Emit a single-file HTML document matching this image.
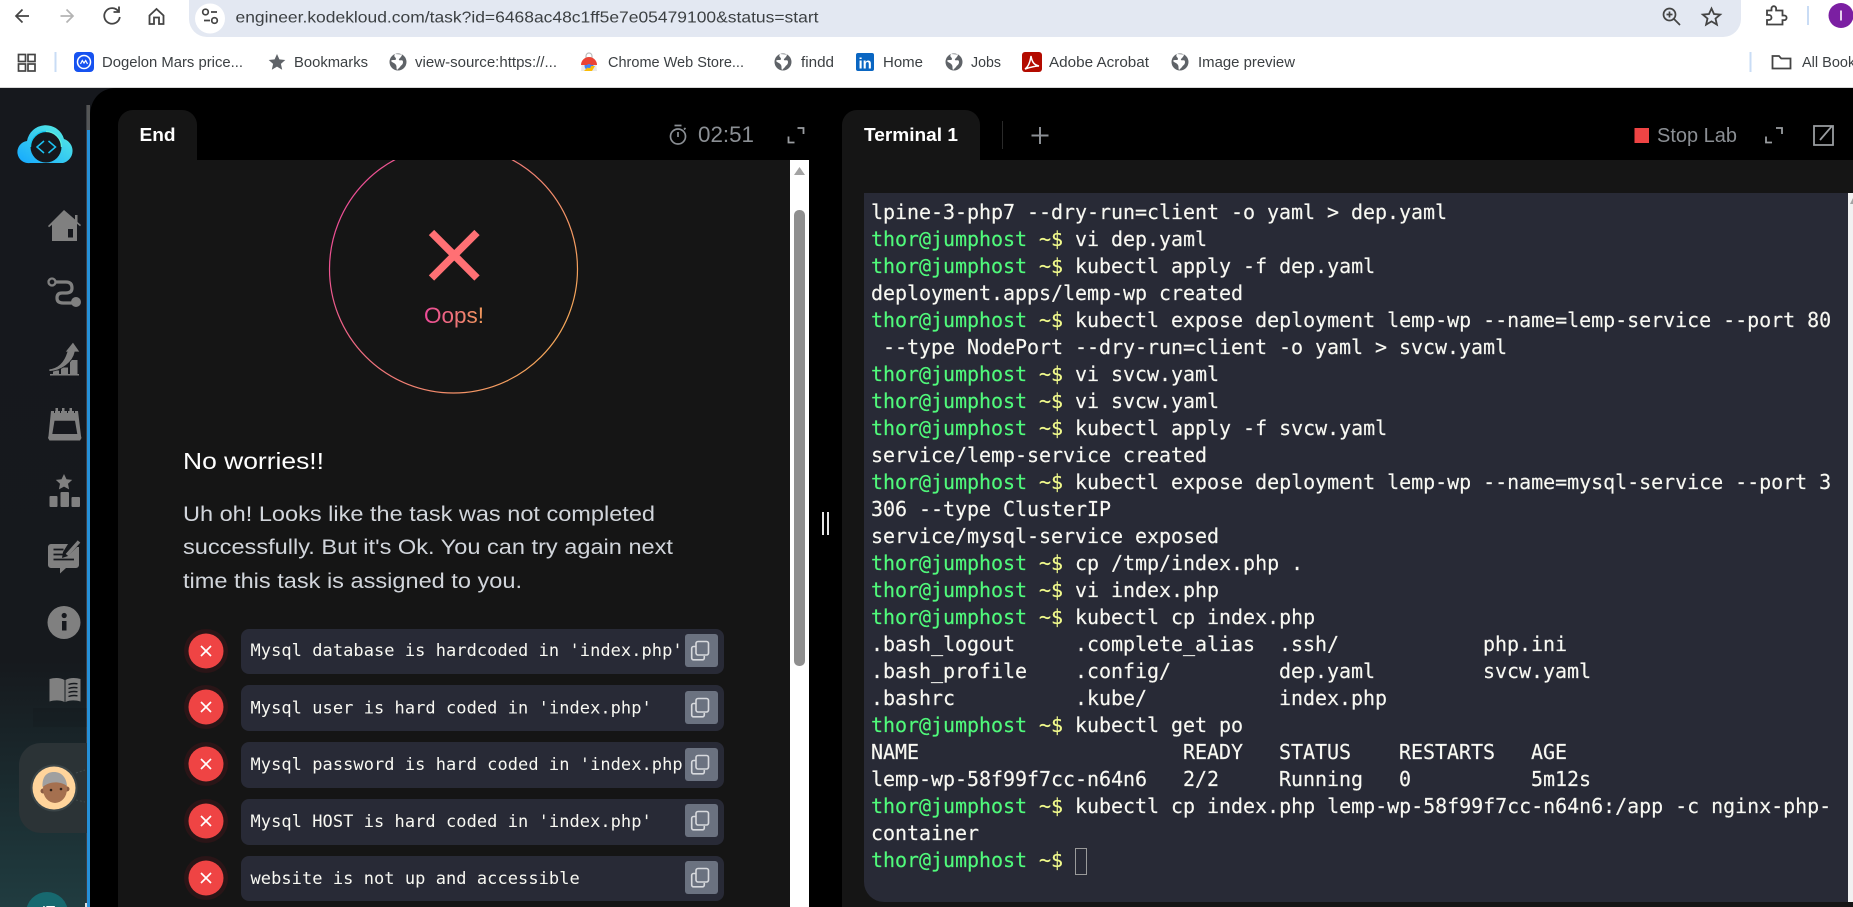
<!DOCTYPE html>
<html lang="en"><head><meta charset="utf-8"><title>KodeKloud Engineer</title>
<style>
html,body{margin:0;padding:0;background:#000;width:1853px;height:907px;overflow:hidden}
svg{position:absolute;left:0;top:0;display:block}
text{font-family:"Liberation Sans",sans-serif}
.b{fill:#3c4043;font-size:14.5px}
.m{font-family:"DejaVu Sans Mono",monospace;font-size:17px;fill:#f8f8f2;letter-spacing:.055px}
pre{position:absolute;left:871px;top:198.5px;margin:0;font:20px/27px "DejaVu Sans Mono",monospace;letter-spacing:-.04px;color:#f8f8f2;white-space:pre;-webkit-text-stroke:.15px}
.g{color:#50fa7b}.y{color:#f1fa8c}
#cur{display:inline-block;width:10px;height:25px;margin-top:1px;border:1px solid #9a9a9a;vertical-align:top}
</style></head><body>
<svg width="1853" height="907" viewBox="0 0 1853 907">
<defs>
<linearGradient id="sb" x1="0" y1="0" x2="0" y2="1"><stop offset="0" stop-color="#16181d"/><stop offset=".7" stop-color="#16191d"/><stop offset=".87" stop-color="#1b2d31"/><stop offset="1" stop-color="#203c40"/></linearGradient>
<linearGradient id="ring" gradientUnits="userSpaceOnUse" x1="329" y1="200" x2="577" y2="340"><stop offset="0" stop-color="#ec4899"/><stop offset="1" stop-color="#f6ad55"/></linearGradient>
<linearGradient id="oo" gradientUnits="userSpaceOnUse" x1="424" y1="0" x2="484" y2="0"><stop offset="0" stop-color="#ec4899"/><stop offset="1" stop-color="#f09a5a"/></linearGradient>
<linearGradient id="cl" x1="0" y1="1" x2="1" y2="0"><stop offset="0" stop-color="#14a8ff"/><stop offset="1" stop-color="#5cf0e0"/></linearGradient>
<linearGradient id="bl" x1="0" y1="0" x2="0" y2="1"><stop offset="0" stop-color="#555"/><stop offset="1" stop-color="#2590d8"/></linearGradient>
<clipPath id="pc"><rect x="118" y="160" width="672" height="747"/></clipPath>
<clipPath id="rowc"><rect x="241" y="620" width="444" height="287"/></clipPath>
<clipPath id="av"><circle cx="54" cy="788" r="21"/></clipPath>
<g id="copy"><rect x="-5.5" y="-9" width="12.5" height="13.5" rx="2" fill="none" stroke="#d7d9dd" stroke-width="1.6"/><path d="M-5.5-4H-8a1.8 1.8 0 0 0-1.8 1.8V7.5A1.8 1.8 0 0 0-8 9.300H1a1.800 1.800 0 0 0 1.800-1.800V5.500" fill="none" stroke="#d7d9dd" stroke-width="1.600"/></g>
<g id="x"><circle r="22" fill="#2a1517"/><circle r="17.500" fill="#ef4444"/><path d="M-5-5L5 5M5-5L-5 5" stroke="#fff" stroke-width="1.700"/></g>
<g id="globe"><circle r="8.500" fill="#5f6368"/><path d="M-3-8C-5-5-2-5-2-3S-6-3-7-1C-5 1-3 1-2 3S-2 6-1 8L2 5C3 3 5 3 5 0S2-1 1-2 4-5 4-7.500Z" fill="#fff"/></g>
</defs>

<!-- browser chrome -->
<rect width="1853" height="88" fill="#fff"/>
<rect y="87" width="1853" height="1" fill="#d9d9d9"/>
<path d="M189 0H1741V19A18 18 0 0 1 1723 37H207A18 18 0 0 1 189 19Z" fill="#e3e8f2"/>
<circle cx="210" cy="18.500" r="15" fill="#fff"/>
<g fill="none" stroke="#444" stroke-width="1.700">
<circle cx="205.500" cy="12" r="2.800"/><path d="M211 12h6M204 20.500h6"/><circle cx="214.500" cy="20.500" r="2.800"/>
<path d="M29 16H16.500M22.500 9.500L16 16l6.500 6.500"/>
<path d="M73 16H60.500M66.500 9.500L73 16l-6.500 6.500" stroke="#b4b4b4"/>
<path d="M118.500 11.500A7.800 7.800 0 1 0 119.800 17" stroke-width="1.800"/><path d="M119 6.500V12H113.500" stroke-width="1.800"/>
<path d="M149.500 15.500L156.500 9l7 6.500V24H159V17.500h-5V24h-4.500Z" stroke-width="1.800"/>
<rect x="18.500" y="54.500" width="7" height="7"/><rect x="28" y="54.500" width="7" height="7"/><rect x="18.500" y="64" width="7" height="7"/><rect x="28" y="64" width="7" height="7"/>
<circle cx="1669.500" cy="14.500" r="6"/><path d="M1674 19l6 6M1666.500 14.500h6M1669.500 11.500v6" stroke-width="1.700"/>
<path d="M1711.500 8.500l2.500 5.500 6.200.6-4.700 4 1.400 6-5.400-3.200-5.400 3.200 1.400-6-4.700-4 6.200-.6Z" stroke-width="1.800"/>
<path d="M1767 10.500h4.500V8.500a2.300 2.300 0 0 1 4.600 0v2h6.400v5h1.800a2.300 2.300 0 0 1 0 4.600h-1.800V24.500H1767v-4.500h2a2.500 2.500 0 0 0 0-5h-2Z" stroke-width="1.800"/>
<path d="M1772.500 68.500V56h6.500l2.200 2.500h9.300v10Z" stroke-width="1.800"/>
</g>
<rect x="54.500" y="52" width="2" height="20" fill="#c9dcf5"/>
<rect x="1807" y="6" width="2" height="19" fill="#c9dcf5"/>
<rect x="1749.500" y="52" width="2" height="20" fill="#c9dcf5"/>
<circle cx="1841" cy="15.500" r="12.500" fill="#7b1fa2"/>
<rect x="1840.200" y="10.500" width="1.600" height="10" fill="#fff"/>
<text x="235.500" y="22.500" font-size="16" fill="#3c4043" textLength="583" lengthAdjust="spacingAndGlyphs">engineer.kodekloud.com/task?id=6468ac48c1ff5e7e05479100&amp;status=start</text>

<rect x="74" y="52" width="20" height="20" rx="4" fill="#1652f0"/>
<circle cx="84" cy="62" r="6.500" fill="none" stroke="#fff" stroke-width="1.500"/><path d="M80.500 64l1.800-3.500 1.700 2.500 1.700-2.500 1.800 3.500" fill="none" stroke="#fff" stroke-width="1.200"/>
<text class="b" x="102" y="67" textLength="141" lengthAdjust="spacingAndGlyphs">Dogelon Mars price...</text>
<path d="M277 54l2.400 5.400 5.900.6-4.400 3.900 1.300 5.800-5.200-3.100-5.200 3.100 1.300-5.800-4.400-3.900 5.900-.6Z" fill="#5f6368"/>
<text class="b" x="294" y="67" textLength="74" lengthAdjust="spacingAndGlyphs">Bookmarks</text>
<use href="#globe" x="398" y="62"/>
<text class="b" x="415" y="67" textLength="142" lengthAdjust="spacingAndGlyphs">view-source:https://...</text>
<path d="M582 62h14l1 9h-16Z" fill="#e8e8e8"/><path d="M586 60v-4a3 3 0 0 1 6 0v4" fill="none" stroke="#bbb" stroke-width="1.200"/>
<circle cx="589" cy="66" r="4.500" fill="#4285f4"/><path d="M581 65a8 8 0 0 1 16 0h-8Z" fill="#ea4335"/><path d="M584 71l5-5 6 0-3 5Z" fill="#fbbc05"/><circle cx="589" cy="66" r="2" fill="#4285f4"/>
<text class="b" x="608" y="67" textLength="136" lengthAdjust="spacingAndGlyphs">Chrome Web Store...</text>
<use href="#globe" x="783" y="62"/>
<text class="b" x="801" y="67" textLength="33" lengthAdjust="spacingAndGlyphs">findd</text>
<rect x="856" y="53" width="18" height="18" rx="2" fill="#0a66c2"/>
<text x="858.500" y="68.500" font-size="15" font-weight="700" fill="#fff">in</text>
<text class="b" x="883" y="67" textLength="40" lengthAdjust="spacingAndGlyphs">Home</text>
<use href="#globe" x="954" y="62"/>
<text class="b" x="971" y="67" textLength="30" lengthAdjust="spacingAndGlyphs">Jobs</text>
<rect x="1022" y="52" width="20" height="20" rx="3" fill="#b30b00"/>
<path d="M1025 69c3-2 5-6 6-13 1 6 3 9 8 10-4 0-8 1-14 3Z" fill="none" stroke="#fff" stroke-width="1.500"/>
<text class="b" x="1049" y="67" textLength="100" lengthAdjust="spacingAndGlyphs">Adobe Acrobat</text>
<use href="#globe" x="1180" y="62"/>
<text class="b" x="1198" y="67" textLength="97" lengthAdjust="spacingAndGlyphs">Image preview</text>
<text class="b" x="1802" y="67">All Bookmarks</text>

<!-- app background -->
<rect y="88" width="1853" height="819" fill="#000"/>
<rect y="88" width="90" height="819" fill="url(#sb)"/>
<path d="M90 88h26c-16 0-26 12-26 28Z" fill="#16181d"/>
<rect x="86" y="105" width="1" height="802" fill="#3a3d42"/>
<rect x="87" y="105" width="3" height="802" fill="url(#bl)"/>
<rect x="87" y="130" width="3" height="777" fill="#2590d8"/>

<!-- logo -->
<path d="M30 163A11 11 0 0 1 27 141 19 19 0 0 1 64 139 12.500 12.500 0 0 1 63 163Z" fill="url(#cl)"/>
<circle cx="46" cy="147" r="15.500" fill="#16181d"/>
<path d="M46 131.500A15.500 15.500 0 0 1 61.500 147" fill="none" stroke="#5cf0e0" stroke-width="1.300"/>
<path d="M46 131.500A15.500 15.500 0 0 0 30.500 147" fill="none" stroke="#14c8f0" stroke-width="1.300"/>
<path d="M44 141l-7 6 7 6M48.500 141l7 6-7 6" fill="none" stroke="#1cc4f5" stroke-width="1.500"/>

<!-- sidebar icons -->
<g fill="#808080">
<path d="M64 210L75 219.500V215h2.500v7l3.500 3-1 1.200-3-2.400V241H52V224.800l-3 2.400-1-1.200Z"/><rect x="68" y="229" width="5" height="8.500" fill="#16181d"/>
<circle cx="76" cy="302" r="5"/>
<path d="M53 374v-3.500h6V374ZM61 374v-6.500h7V374ZM70 374v-14h7.500v14ZM50 374h29v1.500H50Z"/>
<path d="M49 369C58 368 64 362 67 352H65L73 342 80 352H75C73 362 62 371 49 371.500Z" stroke="#16181d" stroke-width=".8"/>
<path d="M55.500 408h2.500v4h-2.500ZM62 408h2.500v4H62ZM69.500 408h2.500v4h-2.500Z"/>
<path d="M51 411H78L81 436 81.500 438 80 440.500H49.500L48 438 48.500 436Z"/>
<path d="M54.500 420.700H75L77.300 434H52.300Z" fill="#16181d"/>
<path d="M54 411h1v2h-1ZM60 411h1v2h-1ZM67 411h1v2h-1ZM74 411h1v2h-1Z" fill="#16181d"/>
<path d="M64 474l2.500 5.200 5.700.7-4.200 3.900 1.100 5.600-5.100-2.800-5.100 2.800 1.100-5.600-4.200-3.900 5.700-.7Z"/>
<rect x="49.500" y="496" width="8" height="11" rx="1"/><rect x="60.500" y="492" width="8.500" height="15" rx="1"/><rect x="71.500" y="497" width="8.500" height="10" rx="1"/>
<path d="M51 544H68L63 552l-1 6 6-2 9-9 2 0V565a3 3 0 0 1-3 3H66l-6 5.500V568H51a3 3 0 0 1-3-3V547a3 3 0 0 1 3-3Z"/>
<path d="M67 555l12-13.500" stroke="#808080" stroke-width="3.500"/>
<path d="M53.500 549.500h10M53.500 554.500h10M53.500 559.500h20.500" stroke="#16181d" stroke-width="1.800"/>
<circle cx="64" cy="622.500" r="16.500"/><rect x="62" y="621" width="4.500" height="9.500" fill="#16181d"/><circle cx="64.200" cy="615.500" r="2.600" fill="#16181d"/>
<path d="M49.500 679c5-1.500 11-1.500 15 1V702c-4-2-10-2-15-.5Z"/>
<path d="M65.500 680c4-2.500 10-2.500 15-1V701.500c-5-1.500-11-1.500-15 .5Z"/>
<path d="M68.500 684.500c3-1.200 6-1.200 9-.7M68.500 688.500c3-1.200 6-1.200 9-.7M68.500 692.500c3-1.200 6-1.200 9-.7M68.500 696.500c3-1.200 6-1.200 9-.7" stroke="#17191e" stroke-width="1.400" fill="none"/>
</g>
<path d="M56 282H66Q72 282 72 288 72 293 66 293H62Q57 293 57 298 57 303 63 303H74" fill="none" stroke="#808080" stroke-width="3.200"/>
<circle cx="52" cy="282" r="3.500" fill="#16181d" stroke="#808080" stroke-width="2.300"/>

<rect x="33" y="708" width="54" height="19" fill="#000" fill-opacity=".08"/>
<path d="M87 743H41A22 22 0 0 0 19 765V811A22 22 0 0 0 41 833H87Z" fill="#2b3336"/>
<circle cx="54" cy="788" r="23.500" fill="#3b4548"/>
<circle cx="54" cy="788" r="21.500" fill="#ffd49b"/>
<g clip-path="url(#av)">
<circle cx="43" cy="791" r="2.500" fill="#8a5b42"/><circle cx="67" cy="789" r="2.500" fill="#8a5b42"/>
<ellipse cx="55" cy="789" rx="12" ry="14" fill="#a5704f"/>
<path d="M42.500 787C42 775 48 772 54 772 61 772 66.500 777 67 786 60 781 50 781 42.500 787Z" fill="#a0a0a0"/>
<circle cx="51" cy="790" r="1.300" fill="#2d2018"/><circle cx="61" cy="789" r="1.300" fill="#2d2018"/>
</g>
<path d="M76 773l9-3M76 800l9 2" stroke="#3f494c" stroke-width="1" stroke-dasharray="2 2" fill="none"/>
<circle cx="47" cy="913" r="21" fill="#17696f"/>
<text x="48.500" y="916" font-size="15" fill="#fff" text-anchor="middle">IT</text>
<rect x="85" y="903" width="2" height="4" fill="#ddd"/>

<!-- left panel -->
<path d="M118 907V125A15 15 0 0 1 133 110H182A15 15 0 0 1 197 125V160H790V907Z" fill="#151515"/>
<text x="139.500" y="141" font-size="18" font-weight="700" fill="#fff" textLength="36" lengthAdjust="spacingAndGlyphs">End</text>
<g fill="none" stroke="#8b8f94" stroke-width="1.700"><circle cx="678" cy="136.500" r="7.500"/><path d="M678 132v5M674.500 125.500h7M684 129.500l1.500-1.500"/></g>
<text x="698" y="142" font-size="22" fill="#8b8f94" textLength="56" lengthAdjust="spacingAndGlyphs">02:51</text>
<path d="M797.500 128h6v6M794.500 142.500h-6v-6" fill="none" stroke="#9a9da1" stroke-width="1.800"/>

<g clip-path="url(#pc)">
<circle cx="453.500" cy="269" r="124" fill="none" stroke="url(#ring)" stroke-width="1.200"/>
<path d="M431.500 232.500L477 278M477 232.500L431.500 278" stroke="#ff7074" stroke-width="7.500"/>
</g>
<text x="424" y="323" font-size="22" fill="url(#oo)" textLength="60" lengthAdjust="spacingAndGlyphs">Oops!</text>
<text x="183" y="469" font-size="23" fill="#fff" textLength="141" lengthAdjust="spacingAndGlyphs">No worries!!</text>
<g font-size="21" fill="#d1d5db">
<text x="183" y="521" textLength="472" lengthAdjust="spacingAndGlyphs">Uh oh! Looks like the task was not completed</text>
<text x="183" y="554" textLength="490" lengthAdjust="spacingAndGlyphs">successfully. But it's Ok. You can try again next</text>
<text x="183" y="588" textLength="339" lengthAdjust="spacingAndGlyphs">time this task is assigned to you.</text>
</g>

<g fill="#282a36">
<rect x="241" y="629" width="483" height="45" rx="8"/>
<rect x="241" y="685" width="483" height="46" rx="8"/>
<rect x="241" y="742" width="483" height="46" rx="8"/>
<rect x="241" y="799" width="483" height="46" rx="8"/>
<rect x="241" y="856" width="483" height="45" rx="8"/>
</g>
<use href="#x" x="206" y="651"/><use href="#x" x="206" y="707"/><use href="#x" x="206" y="764"/><use href="#x" x="206" y="821"/><use href="#x" x="206" y="878"/>
<g clip-path="url(#rowc)">
<text class="m" x="250.500" y="656">Mysql database is hardcoded in 'index.php'</text>
<text class="m" x="250.500" y="713.500">Mysql user is hard coded in 'index.php'</text>
<text class="m" x="250.500" y="770">Mysql password is hard coded in 'index.php'</text>
<text class="m" x="250.500" y="827">Mysql HOST is hard coded in 'index.php'</text>
<text class="m" x="250.500" y="884">website is not up and accessible</text>
</g>
<g fill="#6b7280">
<rect x="685" y="634" width="33" height="33" rx="3"/><rect x="685" y="691" width="33" height="33" rx="3"/><rect x="685" y="748" width="33" height="33" rx="3"/><rect x="685" y="804" width="33" height="33" rx="3"/><rect x="685" y="861" width="33" height="33" rx="3"/>
</g>
<use href="#copy" x="701.500" y="650.500"/><use href="#copy" x="701.500" y="707.500"/><use href="#copy" x="701.500" y="764.500"/><use href="#copy" x="701.500" y="820.500"/><use href="#copy" x="701.500" y="877.500"/>

<rect x="790" y="160" width="19" height="747" fill="#fff"/>
<path d="M799.500 167l5.500 8h-11Z" fill="#a3a3a3"/>
<rect x="794" y="210" width="11" height="456" rx="5" fill="#8f8f8f"/>

<!-- divider -->
<rect x="822" y="512" width="2" height="23" fill="#e5e5e5"/><rect x="827" y="512" width="2" height="23" fill="#e5e5e5"/>

<!-- right panel -->
<path d="M842 907V125A15 15 0 0 1 857 110H965A15 15 0 0 1 980 125V160H1853V907Z" fill="#151515"/>
<text x="864" y="141" font-size="18" font-weight="700" fill="#fff" textLength="94" lengthAdjust="spacingAndGlyphs">Terminal 1</text>
<rect x="1002" y="121" width="1" height="28" fill="#2a2a2a"/>
<path d="M1040 127v17M1031.500 135.500h17" stroke="#8b8f94" stroke-width="2"/>
<rect x="1634.500" y="128" width="14.500" height="15" fill="#ef4444"/>
<text x="1657" y="142" font-size="20" fill="#8b8f94" textLength="80" lengthAdjust="spacingAndGlyphs">Stop Lab</text>
<path d="M1776 128h6v6M1772 142.500h-6v-6" fill="none" stroke="#9a9da1" stroke-width="1.800"/>
<path d="M1814 126H1833V145H1814ZM1820 140L1832 126" fill="none" stroke="#9a9da1" stroke-width="1.800"/>
<path d="M864 193H1853V902H884A20 20 0 0 1 864 882Z" fill="#282a36"/>
<rect x="1848" y="193" width="5" height="709" fill="#f1f1f1"/>
<path d="M1853 198l-3 6h3Z" fill="#a3a3a3"/>
</svg>
<pre>lpine-3-php7 --dry-run=client -o yaml &gt; dep.yaml
<span class="g">thor@jumphost</span> <span class="y">~$</span> vi dep.yaml
<span class="g">thor@jumphost</span> <span class="y">~$</span> kubectl apply -f dep.yaml
deployment.apps/lemp-wp created
<span class="g">thor@jumphost</span> <span class="y">~$</span> kubectl expose deployment lemp-wp --name=lemp-service --port 80
 --type NodePort --dry-run=client -o yaml &gt; svcw.yaml
<span class="g">thor@jumphost</span> <span class="y">~$</span> vi svcw.yaml
<span class="g">thor@jumphost</span> <span class="y">~$</span> vi svcw.yaml
<span class="g">thor@jumphost</span> <span class="y">~$</span> kubectl apply -f svcw.yaml
service/lemp-service created
<span class="g">thor@jumphost</span> <span class="y">~$</span> kubectl expose deployment lemp-wp --name=mysql-service --port 3
306 --type ClusterIP
service/mysql-service exposed
<span class="g">thor@jumphost</span> <span class="y">~$</span> cp /tmp/index.php .
<span class="g">thor@jumphost</span> <span class="y">~$</span> vi index.php
<span class="g">thor@jumphost</span> <span class="y">~$</span> kubectl cp index.php
.bash_logout     .complete_alias  .ssh/            php.ini
.bash_profile    .config/         dep.yaml         svcw.yaml
.bashrc          .kube/           index.php
<span class="g">thor@jumphost</span> <span class="y">~$</span> kubectl get po
NAME                      READY   STATUS    RESTARTS   AGE
lemp-wp-58f99f7cc-n64n6   2/2     Running   0          5m12s
<span class="g">thor@jumphost</span> <span class="y">~$</span> kubectl cp index.php lemp-wp-58f99f7cc-n64n6:/app -c nginx-php-
container
<span class="g">thor@jumphost</span> <span class="y">~$</span> <span id="cur"></span></pre>
</body></html>
